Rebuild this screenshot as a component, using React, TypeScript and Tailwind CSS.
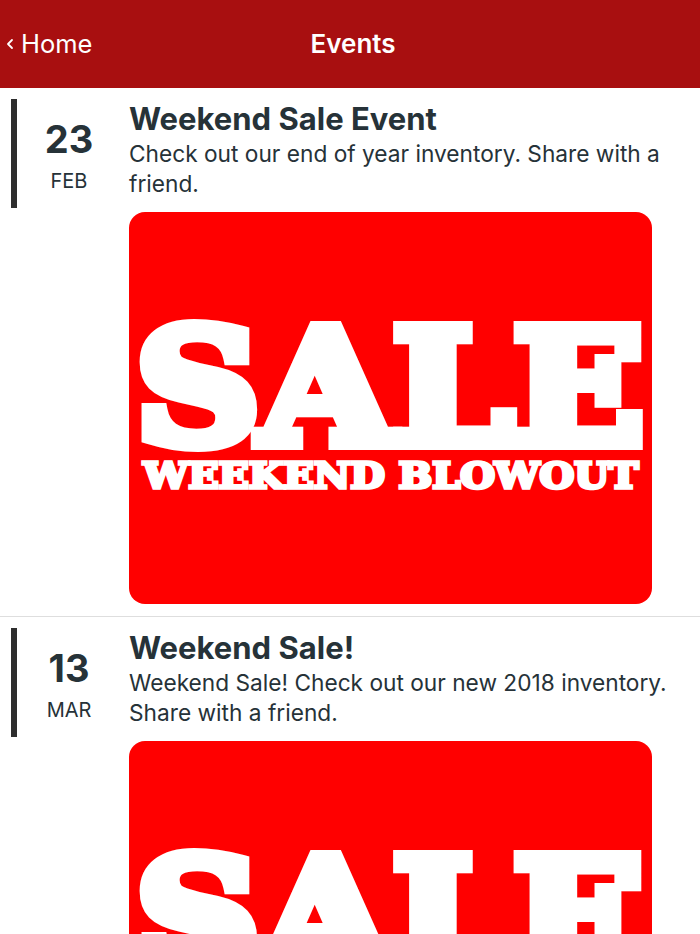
import React from "react"

type EventItem = {
  day: string
  month: string
  title: string
  description: string
}

const events: EventItem[] = [
  {
    day: "23",
    month: "FEB",
    title: "Weekend Sale Event",
    description: "Check out our end of year inventory. Share with a friend.",
  },
  {
    day: "13",
    month: "MAR",
    title: "Weekend Sale!",
    description: "Weekend Sale! Check out our new 2018 inventory. Share with a friend.",
  },
]

// Red "SALE / WEEKEND BLOWOUT" banner, drawn with real text
const SaleBanner = () => (
  <svg viewBox="0 0 523 392" width="523" height="392" className="block">
    <text
      x="7"
      y="231"
      textLength="508"
      lengthAdjust="spacingAndGlyphs"
      fontFamily="'DejaVu Serif', 'Liberation Serif', serif"
      fontWeight="900"
      fontSize="157"
      fill="#fff"
      stroke="#fff"
      strokeWidth="14"
      strokeLinejoin="miter"
    >
      SALE
    </text>
    <text
      x="14.5"
      y="276"
      textLength="495"
      lengthAdjust="spacingAndGlyphs"
      fontFamily="'DejaVu Serif', 'Liberation Serif', serif"
      fontWeight="900"
      fontSize="36"
      fill="#fff"
      stroke="#fff"
      strokeWidth="3.5"
      strokeLinejoin="miter"
    >
      WEEKEND BLOWOUT
    </text>
  </svg>
)

const BackChevron = () => (
  <svg width="8" height="12" viewBox="0 0 8 12" fill="none" stroke="currentColor" strokeWidth="1.8" strokeLinecap="round" strokeLinejoin="round">
    <polyline points="6 2 2 6 6 10" />
  </svg>
)

function EventRow({ item }: { item: EventItem }) {
  return (
    <div className="flex pt-[11px] pb-[12px] border-b border-[#dedede]">
      {/* date block */}
      <div className="ml-[11px] mr-[8px] w-[110px] h-[109px] shrink-0 border-l-[6px] border-[#2e2e2e] flex flex-col items-center pt-[18px] text-[#263238]">
        <span className="text-[38px] leading-[44px] font-bold">{item.day}</span>
        <span className="mt-[8px] text-[20px] leading-[24px]">{item.month}</span>
      </div>

      <div className="flex-1 pr-[8px] text-[#263238]">
        <h2 className="text-[31px] leading-[40px] font-bold">{item.title}</h2>
        <p className="text-[22.7px] leading-[30px]">{item.description}</p>
        <div className="mt-[13px] w-[523px] h-[392px] rounded-[16px] bg-[#ff0000] overflow-hidden">
          <SaleBanner />
        </div>
      </div>
    </div>
  )
}

export default function App() {
  return (
    <div className="w-[700px] h-[934px] overflow-hidden bg-white font-['Inter','Roboto',sans-serif]">
      <header className="h-[88px] bg-[#a80f10] flex items-center text-white">
        <div className="flex-1 flex items-center pl-[6px]">
          <BackChevron />
          <span className="ml-[7px] text-[25.5px] leading-[30px]">Home</span>
        </div>
        <h1 className="text-[26px] leading-[32px] font-semibold">Events</h1>
        <div className="flex-1" />
      </header>

      <main>
        {events.map((item) => (
          <EventRow key={item.day} item={item} />
        ))}
      </main>
    </div>
  )
}
